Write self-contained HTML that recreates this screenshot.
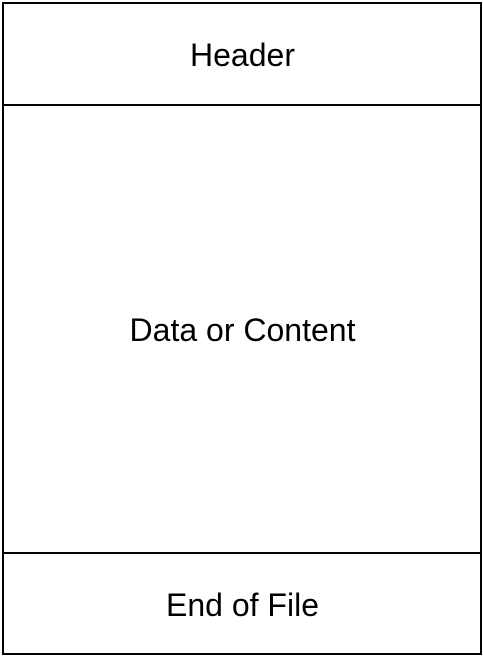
<!DOCTYPE html>
<html><head><style>
body{margin:0;width:483px;height:656px;background:#fff;position:relative;font-family:"Liberation Sans",sans-serif;}
.l{position:absolute;background:#000;}
.t{position:absolute;left:3px;width:479px;text-align:center;font-size:32px;line-height:36px;color:#000;}
</style></head><body>
<div class="l" style="left:2px;top:2px;width:480px;height:2px"></div>
<div class="l" style="left:2px;top:104px;width:480px;height:2px"></div>
<div class="l" style="left:2px;top:552px;width:480px;height:2px"></div>
<div class="l" style="left:2px;top:653px;width:480px;height:2px"></div>
<div class="l" style="left:2px;top:2px;width:2px;height:653px"></div>
<div class="l" style="left:480px;top:2px;width:2px;height:653px"></div>
<div class="t" style="top:37px">Header</div>
<div class="t" style="top:312px">Data or Content</div>
<div class="t" style="top:587px">End of File</div>
</body></html>
